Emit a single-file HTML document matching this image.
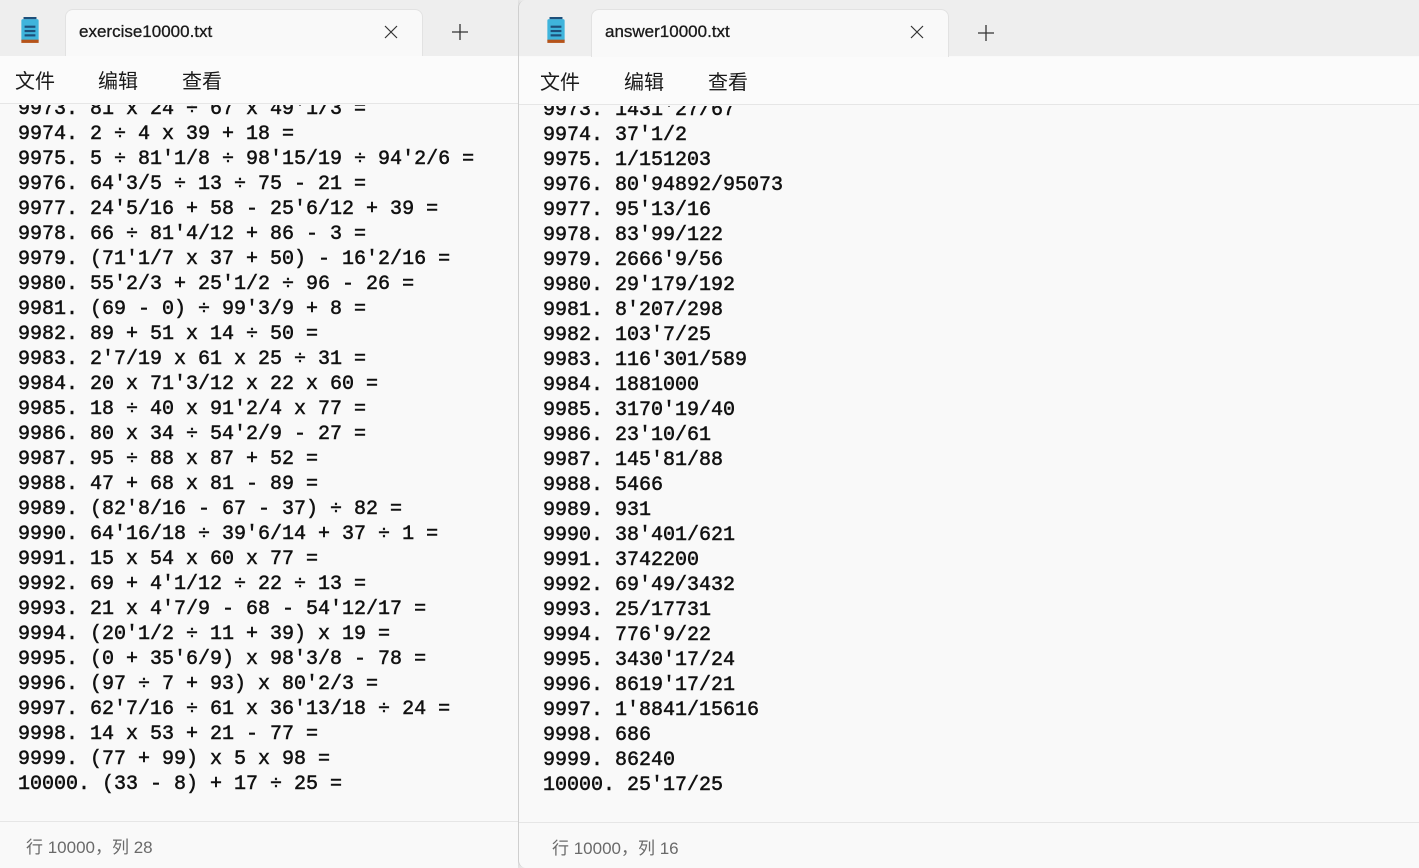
<!DOCTYPE html>
<html><head><meta charset="utf-8"><style>
*{margin:0;padding:0;box-sizing:border-box}
body{width:1419px;height:868px;overflow:hidden;background:#eeeeee;font-family:"Liberation Sans","Noto Sans CJK SC",sans-serif;position:relative}
.win{position:absolute;top:0;height:868px;background:#f9f9f9;overflow:hidden}
.tb{position:absolute;left:0;right:0;top:0;height:56px;background:#eeeeee}
.tab{position:absolute;top:9px;height:48px;width:358px;background:#f9f9f9;border:1px solid #e2e2e2;border-bottom:none;border-radius:8px 8px 0 0}
.tab .t{position:absolute;left:13px;top:12px;font-size:17px;color:#1a1a1a;-webkit-text-stroke:0.3px #1a1a1a}
.tab svg{position:absolute;right:24px;top:15px}
.plus{position:absolute;top:24px}
.ico{position:absolute;left:20px;top:17px;width:20px;height:27px}
.menu{position:absolute;left:0;right:0;top:56px;height:48px;background:#fbfbfb;border-bottom:1px solid #e6e6e6;font-size:20px;color:#1a1a1a}
.menu span{position:absolute;top:9px}
.txt{position:absolute;left:0;right:0;top:105px;height:716px;overflow:hidden}
.txt pre{position:absolute;left:18px;top:-8px;font-family:"Liberation Mono",monospace;font-size:20px;line-height:25px;color:#111;-webkit-text-stroke:0.5px #111}
.st{position:absolute;left:0;right:0;top:821px;height:47px;border-top:1px solid #e6e6e6;background:#f9f9f9;font-size:17px;color:#6a6a6a}
.st span{position:absolute;left:26px;top:11px}
</style></head><body>
<div class="win" style="left:0;width:518px;box-shadow:2px 0 6px rgba(0,0,0,.1)">
 <div class="tb"></div>
 <svg class="ico" viewBox="0 0 18 25"><rect x="1" y="2" width="16" height="21" rx="1.5" fill="#3fb4dc"/><rect x="1" y="21" width="16" height="3" fill="#b5531a"/><rect x="4" y="8" width="10" height="2" fill="#1d4f7a"/><rect x="4" y="12" width="10" height="2" fill="#1d4f7a"/><rect x="4" y="16" width="10" height="2" fill="#1d4f7a"/><rect x="3" y="0" width="12" height="2" fill="#1d4f7a"/></svg>
 <div class="tab" style="left:65px"><span class="t">exercise10000.txt</span><svg width="14" height="14" viewBox="0 0 14 14"><path d="M1 1L13 13M13 1L1 13" stroke="#333" stroke-width="1.2"/></svg></div>
 <svg class="plus" style="left:452px" width="16" height="16" viewBox="0 0 16 16"><path d="M8 0V16M0 8H16" stroke="#333" stroke-width="1.3"/></svg>
 <div class="menu"><span style="left:15px">文件</span><span style="left:98px">编辑</span><span style="left:182px">查看</span></div>
 <div class="txt"><pre>9973. 81 x 24 ÷ 67 x 49'1/3 =
9974. 2 ÷ 4 x 39 + 18 =
9975. 5 ÷ 81'1/8 ÷ 98'15/19 ÷ 94'2/6 =
9976. 64'3/5 ÷ 13 ÷ 75 - 21 =
9977. 24'5/16 + 58 - 25'6/12 + 39 =
9978. 66 ÷ 81'4/12 + 86 - 3 =
9979. (71'1/7 x 37 + 50) - 16'2/16 =
9980. 55'2/3 + 25'1/2 ÷ 96 - 26 =
9981. (69 - 0) ÷ 99'3/9 + 8 =
9982. 89 + 51 x 14 ÷ 50 =
9983. 2'7/19 x 61 x 25 ÷ 31 =
9984. 20 x 71'3/12 x 22 x 60 =
9985. 18 ÷ 40 x 91'2/4 x 77 =
9986. 80 x 34 ÷ 54'2/9 - 27 =
9987. 95 ÷ 88 x 87 + 52 =
9988. 47 + 68 x 81 - 89 =
9989. (82'8/16 - 67 - 37) ÷ 82 =
9990. 64'16/18 ÷ 39'6/14 + 37 ÷ 1 =
9991. 15 x 54 x 60 x 77 =
9992. 69 + 4'1/12 ÷ 22 ÷ 13 =
9993. 21 x 4'7/9 - 68 - 54'12/17 =
9994. (20'1/2 ÷ 11 + 39) x 19 =
9995. (0 + 35'6/9) x 98'3/8 - 78 =
9996. (97 ÷ 7 + 93) x 80'2/3 =
9997. 62'7/16 ÷ 61 x 36'13/18 ÷ 24 =
9998. 14 x 53 + 21 - 77 =
9999. (77 + 99) x 5 x 98 =
10000. (33 - 8) + 17 ÷ 25 =</pre></div>
 <div class="st"><span>行 10000，列 28</span></div>
</div>
<div class="win" style="left:518px;width:901px;border-left:1px solid #cfcfcf;border-radius:8px 0 0 8px">
 <div class="tb"></div>
 <svg class="ico" style="left:27px" viewBox="0 0 18 25"><rect x="1" y="2" width="16" height="21" rx="1.5" fill="#3fb4dc"/><rect x="1" y="21" width="16" height="3" fill="#b5531a"/><rect x="4" y="8" width="10" height="2" fill="#1d4f7a"/><rect x="4" y="12" width="10" height="2" fill="#1d4f7a"/><rect x="4" y="16" width="10" height="2" fill="#1d4f7a"/><rect x="3" y="0" width="12" height="2" fill="#1d4f7a"/></svg>
 <div class="tab" style="left:72px"><span class="t">answer10000.txt</span><svg width="14" height="14" viewBox="0 0 14 14"><path d="M1 1L13 13M13 1L1 13" stroke="#333" stroke-width="1.2"/></svg></div>
 <svg class="plus" style="left:459px;top:25px" width="16" height="16" viewBox="0 0 16 16"><path d="M8 0V16M0 8H16" stroke="#333" stroke-width="1.3"/></svg>
 <div class="menu" style="top:57px"><span style="left:21px">文件</span><span style="left:105px">编辑</span><span style="left:189px">查看</span></div>
 <div class="txt" style="top:106px"><pre style="left:24px">9973. 1431'27/67
9974. 37'1/2
9975. 1/151203
9976. 80'94892/95073
9977. 95'13/16
9978. 83'99/122
9979. 2666'9/56
9980. 29'179/192
9981. 8'207/298
9982. 103'7/25
9983. 116'301/589
9984. 1881000
9985. 3170'19/40
9986. 23'10/61
9987. 145'81/88
9988. 5466
9989. 931
9990. 38'401/621
9991. 3742200
9992. 69'49/3432
9993. 25/17731
9994. 776'9/22
9995. 3430'17/24
9996. 8619'17/21
9997. 1'8841/15616
9998. 686
9999. 86240
10000. 25'17/25</pre></div>
 <div class="st" style="top:822px"><span style="left:33px">行 10000，列 16</span></div>
</div>
</body></html>
